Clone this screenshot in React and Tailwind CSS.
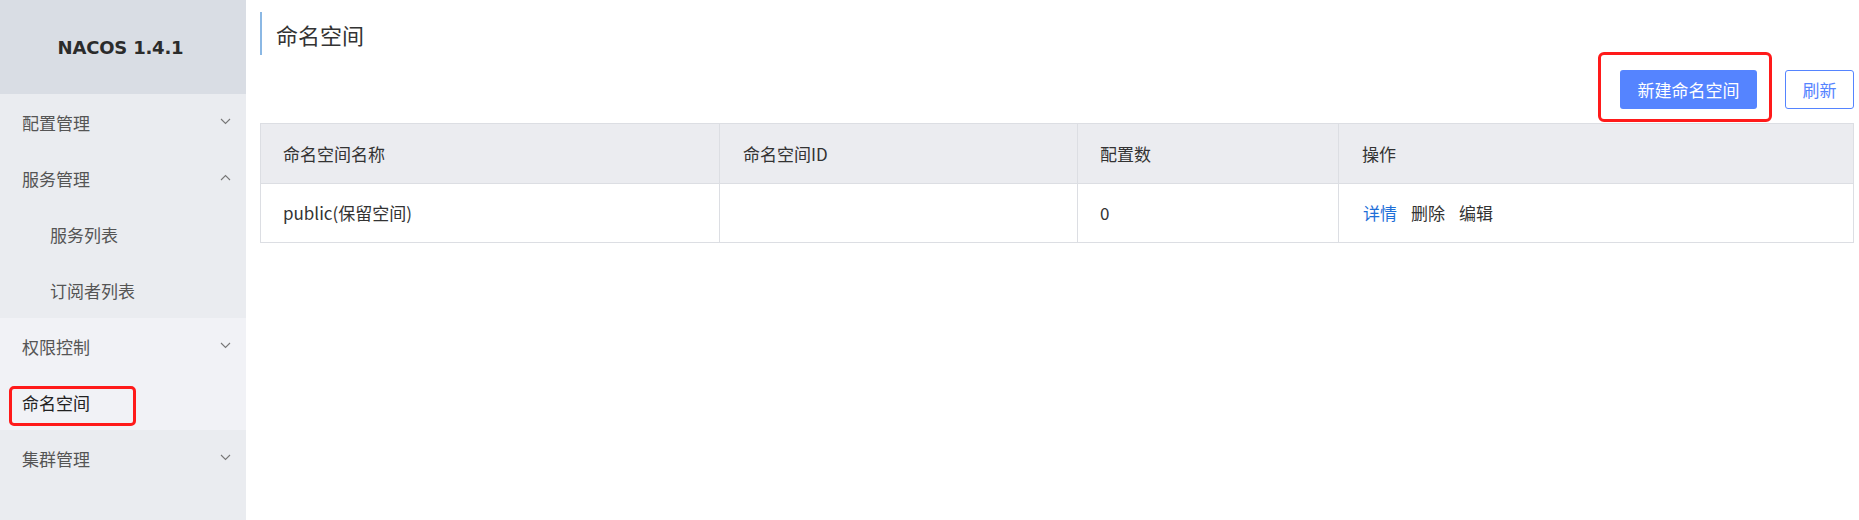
import React from "react";

const cjk = { fontFamily: '"Microsoft YaHei", "Noto Sans CJK SC", "Noto Sans", sans-serif' };

function Chevron({ up }) {
  return (
    <svg width="11" height="7" viewBox="0 0 11 7" className="absolute right-[15px] top-[calc(50%-4px)]">
      {up ? (
        <path d="M1 6 L5.5 1.5 L10 6" fill="none" stroke="#777" strokeWidth="1.1" />
      ) : (
        <path d="M1 1 L5.5 5.5 L10 1" fill="none" stroke="#777" strokeWidth="1.1" />
      )}
    </svg>
  );
}

function MenuItem({ label, chevron, sub }) {
  return (
    <div className={`relative h-[56px] flex items-center pt-[2px] ${sub ? "pl-[50px]" : "pl-[22px]"} text-[17px] text-[#555]`}>
      <span>{label}</span>
      {chevron && <Chevron up={chevron === "up"} />}
    </div>
  );
}

export default function App() {
  return (
    <div className="flex w-full h-[520px] bg-white" style={cjk}>
      <aside className="w-[246px] shrink-0 bg-[#eaecf0] flex flex-col">
        <div className="h-[94px] bg-[#d9dde4] flex items-center justify-center pr-[5px]">
          <span
            className="font-bold text-[18px] tracking-[-0.2px] text-[#2b2b2b]"
            style={{ fontFamily: '"DejaVu Sans", Verdana, sans-serif' }}
          >
            NACOS 1.4.1
          </span>
        </div>
        <MenuItem label="配置管理" chevron="down" />
        <MenuItem label="服务管理" chevron="up" />
        <MenuItem label="服务列表" sub />
        <MenuItem label="订阅者列表" sub />
        <div className="bg-[#f1f2f6]">
          <MenuItem label="权限控制" chevron="down" />
          <div className="relative h-[56px] flex items-center pt-[2px] pl-[22px] text-[17px] text-[#222]">
            <span>命名空间</span>
            <div className="absolute left-[9px] top-[12px] w-[127px] h-[40px] border-[3px] border-[#ff1a1a] rounded-[5px]" />
          </div>
        </div>
        <MenuItem label="集群管理" chevron="down" />
      </aside>

      <main className="flex-1 pl-[14px] pr-[5px] pt-[12px] text-[#333]">
        <div className="h-[43px] border-l-2 border-[#8bb8e4] flex items-center pl-[14px]">
          <h1 className="text-[22px] text-[#333] font-normal leading-none">命名空间</h1>
        </div>
        <div className="flex justify-end items-center gap-[28px] mt-[15px] h-[39px]">
          <div className="relative">
            <button className="h-[39px] w-[137px] rounded-[3px] bg-[#5584ff] text-white text-[17px]">
              新建命名空间
            </button>
            <div className="absolute left-[-22px] top-[-18px] right-[-15px] bottom-[-13px] border-[3px] border-[#ff1a1a] rounded-[6px]" />
          </div>
          <button className="h-[39px] w-[69px] rounded-[3px] border border-[#5584ff] text-[#5584ff] bg-white text-[17px]">
            刷新
          </button>
        </div>

        <div className="mt-[14px] border border-[#dcdee3]">
          <div className="grid grid-cols-[459px_358px_261px_1fr] h-[60px] bg-[#ebecf0] border-b border-[#dcdee3] text-[17px] text-[#333]">
            <div className="flex items-center pl-[22px] border-r border-[#dcdee3]">命名空间名称</div>
            <div className="flex items-center pl-[23px] border-r border-[#dcdee3]">命名空间ID</div>
            <div className="flex items-center pl-[22px] border-r border-[#dcdee3]">配置数</div>
            <div className="flex items-center pl-[23px]">操作</div>
          </div>
          <div className="grid grid-cols-[459px_358px_261px_1fr] h-[58px] bg-white text-[17px] text-[#333]">
            <div className="flex items-center pl-[22px] border-r border-[#dcdee3]">public(保留空间)</div>
            <div className="flex items-center pl-[23px] border-r border-[#dcdee3]"></div>
            <div className="flex items-center pl-[22px] border-r border-[#dcdee3]">0</div>
            <div className="flex items-center pl-[24px] gap-[14px]">
              <span className="text-[#1f6fd8]">详情</span>
              <span>删除</span>
              <span>编辑</span>
            </div>
          </div>
        </div>
      </main>
    </div>
  );
}
